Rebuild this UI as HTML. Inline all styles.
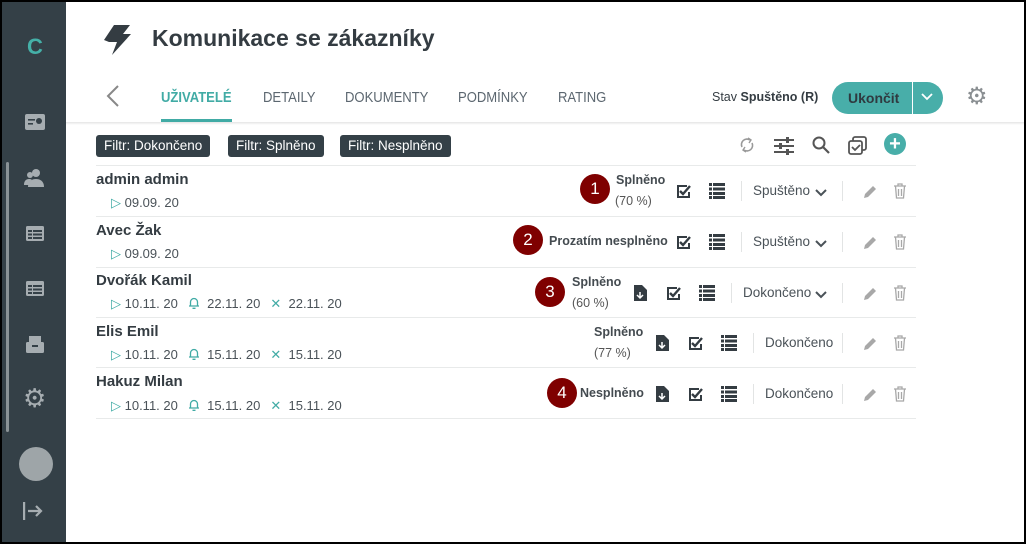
<!DOCTYPE html>
<html><head><meta charset="utf-8"><style>
*{margin:0;padding:0;box-sizing:border-box}
body{width:1026px;height:544px;background:#000;font-family:"Liberation Sans",sans-serif;position:relative;overflow:hidden}
#frame{position:absolute;left:2px;top:2px;width:1022px;height:540px;background:#fff;overflow:hidden}
#side{position:absolute;left:0;top:0;width:64px;height:540px;background:#344047}
.a{position:absolute}
.tab{position:absolute;top:87px;font-size:15px;color:#5c6770;transform:scaleX(.87);transform-origin:0 0;white-space:nowrap}
.chip{position:absolute;top:133px;height:22px;background:#344047;color:#fff;font-size:13.5px;line-height:22px;padding:0 8px;border-radius:3px}
.sep{position:absolute;left:94px;width:820px;height:1px;background:#e8eaea}
.name{position:absolute;left:94px;font-size:15px;font-weight:bold;color:#343c42}
.d{position:absolute;font-size:13px;color:#4a5258;white-space:nowrap}
.t{color:#41aba5}
.st{position:absolute;font-size:12.5px;font-weight:bold;color:#444b50}
.pc{position:absolute;font-size:12.5px;color:#555}
.badge{position:absolute;width:30px;height:30px;border-radius:50%;background:#7f0000;color:#fff;font-size:17px;line-height:30px;text-align:center}
.dd{position:absolute;font-size:13.5px;color:#4a5258;white-space:nowrap}
.vl{position:absolute;width:1px;height:20px;background:#e2e4e4}
.bell{display:inline-block;width:12px;height:13px;vertical-align:-1px;margin-left:10px}
.x{margin-left:10px}
</style></head><body><div id="frame">
<div id="side">
 <div class="a" style="left:25px;top:32px;color:#45b0a8;font-weight:bold;font-size:22px">C</div>
 <div class="a" style="left:4px;top:160px;width:3px;height:270px;background:#8a9296;border-radius:2px"></div>
 <svg class="a" style="left:23px;top:112px" width="20" height="16"><rect x="0" y="0" width="20" height="16" rx="2" fill="#a6adb1"/><rect x="3" y="5" width="7" height="1.6" fill="#344047"/><rect x="3" y="9" width="5" height="1.6" fill="#344047"/><circle cx="14" cy="7" r="3" fill="#344047"/></svg>
 <svg class="a" style="left:22px;top:166px" width="22" height="20"><circle cx="12" cy="5" r="4" fill="#a6adb1"/><path d="M4 19c0-6 4-8 8-8s8 2 8 8z" fill="#a6adb1"/><circle cx="6" cy="7" r="3" fill="#a6adb1"/><path d="M0 17c0-4 2-6 5-6 1 0 2 0 3 1-2 1-3 3-3 5z" fill="#a6adb1"/></svg>
 <svg class="a" style="left:24px;top:224px" width="18" height="15"><rect width="18" height="15" rx="1.5" fill="#a6adb1"/><g fill="#344047"><rect x="2" y="4" width="4" height="2"/><rect x="7" y="4" width="9" height="2"/><rect x="2" y="7.5" width="4" height="2"/><rect x="7" y="7.5" width="9" height="2"/><rect x="2" y="11" width="4" height="2"/><rect x="7" y="11" width="9" height="2"/></g></svg>
 <svg class="a" style="left:24px;top:279px" width="18" height="15"><rect width="18" height="15" rx="1.5" fill="#a6adb1"/><g fill="#344047"><rect x="2" y="4" width="4" height="2"/><rect x="7" y="4" width="9" height="2"/><rect x="2" y="7.5" width="4" height="2"/><rect x="7" y="7.5" width="9" height="2"/><rect x="2" y="11" width="4" height="2"/><rect x="7" y="11" width="9" height="2"/></g></svg>
 <svg class="a" style="left:24px;top:333px" width="18" height="18"><rect x="3" y="1" width="12" height="6" fill="#a6adb1"/><rect x="0" y="7" width="18" height="11" rx="1.5" fill="#a6adb1"/><rect x="6" y="10" width="6" height="2" fill="#344047"/></svg>
 <div class="a" style="left:21px;top:383px;color:#a6adb1;font-size:26px;line-height:26px">⚙</div>
 <div class="a" style="left:17px;top:445px;width:34px;height:34px;border-radius:50%;background:#9ea5a8"></div>
 <svg class="a" style="left:21px;top:500px" width="20" height="18"><rect x="0" y="0" width="2.2" height="18" fill="#a6adb1"/><path d="M5 9h13M13 4l5 5-5 5" stroke="#a6adb1" stroke-width="2.2" fill="none"/></svg>
</div>
<svg class="a" style="left:100px;top:22px" width="30" height="32"><path d="M12 1h16l-7 9h8L10 31l5-13H7l-5-2z" fill="#343c42"/></svg>
<div class="a" style="left:150px;top:23px;font-size:23px;font-weight:bold;color:#343c42">Komunikace se zákazníky</div>
<svg class="a" style="left:104px;top:83px" width="14" height="22"><path d="M12 1L2 11l10 10" stroke="#888" stroke-width="2" fill="none"/></svg>
<div class="tab" style="left:159px;color:#41aba5;font-weight:bold">UŽIVATELÉ</div>
<div class="a" style="left:159px;top:117px;width:71px;height:4px;background:#41aba5"></div>
<div class="tab" style="left:261px">DETAILY</div>
<div class="tab" style="left:343px">DOKUMENTY</div>
<div class="tab" style="left:456px">PODMÍNKY</div>
<div class="tab" style="left:556px">RATING</div>
<div class="a" style="left:710px;top:88px;font-size:12.5px;color:#343c42">Stav <b>Spuštěno (R)</b></div>
<div class="a" style="left:830px;top:80px;width:111px;height:32px;border-radius:16px;background:#48aea9"></div>
<div class="a" style="left:910px;top:80px;width:1px;height:32px;background:#fff"></div>
<div class="a" style="left:846px;top:88px;font-size:14px;font-weight:bold;color:#2f3a40">Ukončit</div>
<svg class="a" style="left:919px;top:91px" width="12" height="8"><path d="M1 1l5 5 5-5" stroke="#fff" stroke-width="1.8" fill="none"/></svg>
<div class="a" style="left:964px;top:81px;font-size:24px;line-height:28px;color:#8a8f92">⚙</div>
<div class="a" style="left:64px;top:120px;width:958px;height:3px;background:linear-gradient(#e4e4e4,#fff)"></div>
<div class="chip" style="left:94px">Filtr: Dokončeno</div>
<div class="chip" style="left:226px">Filtr: Splněno</div>
<div class="chip" style="left:338px">Filtr: Nesplněno</div>
<svg class="a" style="left:737px;top:135px" width="16" height="16"><path d="M3 10a5.5 5.5 0 0 1 8-7M13 6a5.5 5.5 0 0 1-8 7" stroke="#999" stroke-width="1.6" fill="none"/><path d="M9 1l3 2-2 3M7 15l-3-2 2-3" stroke="#999" stroke-width="1.4" fill="none"/></svg>
<svg class="a" style="left:772px;top:135px" width="20" height="18"><g stroke="#555" stroke-width="2"><path d="M0 3h20M0 9h20M0 15h20"/></g><g fill="#555"><rect x="12" y="0" width="3" height="6"/><rect x="5" y="6" width="3" height="6"/><rect x="12" y="12" width="3" height="6"/></g></svg>
<svg class="a" style="left:810px;top:134px" width="18" height="18"><circle cx="7" cy="7" r="5.5" stroke="#555" stroke-width="2" fill="none"/><path d="M11 11l6 6" stroke="#555" stroke-width="2.2"/></svg>
<svg class="a" style="left:846px;top:134px" width="20" height="20"><rect x="5" y="1" width="13" height="13" rx="2" stroke="#555" stroke-width="1.8" fill="none"/><rect x="1" y="5" width="13" height="13" rx="2" stroke="#555" stroke-width="1.8" fill="#fff"/><path d="M4 11l3 3 5-5" stroke="#555" stroke-width="1.8" fill="none"/></svg>
<div class="a" style="left:882px;top:131px;width:22px;height:22px;border-radius:50%;background:#48aea9;color:#fff;text-align:center;font-size:20px;line-height:22px;font-weight:bold">+</div>

<div class="sep" style="top:163px"></div>
<div class="sep" style="top:214px"></div>
<div class="sep" style="top:265px"></div>
<div class="sep" style="top:315px"></div>
<div class="sep" style="top:365px"></div>
<div class="sep" style="top:416px"></div>

<svg width="0" height="0" style="position:absolute"><defs>
<g id="chk"><path d="M1 2h10v2H3v9h9V9h2v6H1z" fill="#343c42"/><path d="M4 8l3 3 7-8" stroke="#343c42" stroke-width="2.4" fill="none"/></g>
<g id="lst" fill="#343c42"><rect x="0" y="0" width="3" height="3"/><rect x="4" y="0" width="12" height="3"/><rect x="0" y="4.5" width="3" height="3"/><rect x="4" y="4.5" width="12" height="3"/><rect x="0" y="9" width="3" height="3"/><rect x="4" y="9" width="12" height="3"/><rect x="0" y="13" width="3" height="3"/><rect x="4" y="13" width="12" height="3"/></g>
<g id="doc"><path d="M0 0h8l5 5v11H0z" fill="#343c42"/><path d="M6 7v6M3 10l3 3 3-3" stroke="#fff" stroke-width="1.5" fill="none"/></g>
<g id="pen"><path d="M2 14l1-4 8-8 3 3-8 8z" fill="#a8a8a8"/></g>
<g id="bin" stroke="#a8a8a8" stroke-width="1.3" fill="none"><path d="M1 3h12M5 3V1h4v2M2.5 3l1 12h7l1-12M5.5 6v7M8.5 6v7"/></g>
<g id="bl" stroke="#41aba5" stroke-width="1.3" fill="none"><path d="M1 10h10M2.5 10V6a3.5 3.5 0 0 1 7 0v4M4.5 12.3h3"/></g>
<g id="cv"><path d="M1 1l5 5 5-5" stroke="#4a5258" stroke-width="2" fill="none"/></g>
</defs></svg>

<div class="name" style="top:169px">admin admin</div>
<div class="d" style="left:109px;top:193px"><span class="t">▷</span> 09.09. 20</div>
<div class="name" style="top:220px">Avec Žak</div>
<div class="d" style="left:109px;top:244px"><span class="t">▷</span> 09.09. 20</div>
<div class="name" style="top:270px">Dvořák Kamil</div>
<div class="d" style="left:109px;top:294px"><span class="t">▷</span> 10.11. 20<svg class="bell"><use href="#bl"/></svg>&nbsp; 22.11. 20<span class="t x">✕</span>&nbsp; 22.11. 20</div>
<div class="name" style="top:321px">Elis Emil</div>
<div class="d" style="left:109px;top:345px"><span class="t">▷</span> 10.11. 20<svg class="bell"><use href="#bl"/></svg>&nbsp; 15.11. 20<span class="t x">✕</span>&nbsp; 15.11. 20</div>
<div class="name" style="top:371px">Hakuz Milan</div>
<div class="d" style="left:109px;top:396px"><span class="t">▷</span> 10.11. 20<svg class="bell"><use href="#bl"/></svg>&nbsp; 15.11. 20<span class="t x">✕</span>&nbsp; 15.11. 20</div>

<div class="badge" style="left:578px;top:172px">1</div>
<div class="st" style="left:614px;top:171px">Splněno</div><div class="pc" style="left:613px;top:192px">(70 %)</div>
<div class="badge" style="left:511px;top:223px">2</div>
<div class="st" style="left:547px;top:232px">Prozatím nesplněno</div>
<div class="badge" style="left:533px;top:275px">3</div>
<div class="st" style="left:570px;top:273px">Splněno</div><div class="pc" style="left:570px;top:294px">(60 %)</div>
<div class="st" style="left:592px;top:323px">Splněno</div><div class="pc" style="left:592px;top:344px">(77 %)</div>
<div class="badge" style="left:545px;top:376px">4</div>
<div class="st" style="left:578px;top:384px">Nesplněno</div>

<svg class="a" style="left:674px;top:181px" width="16" height="16"><use href="#chk"/></svg>
<svg class="a" style="left:707px;top:181px" width="16" height="16"><use href="#lst"/></svg>
<div class="vl" style="left:739px;top:179px"></div>
<div class="dd" style="left:751px;top:181px">Spuštěno</div>
<svg class="a" style="left:813px;top:187px" width="12" height="8"><use href="#cv"/></svg>
<div class="vl" style="left:840px;top:179px"></div>

<svg class="a" style="left:674px;top:232px" width="16" height="16"><use href="#chk"/></svg>
<svg class="a" style="left:707px;top:232px" width="16" height="16"><use href="#lst"/></svg>
<div class="vl" style="left:739px;top:230px"></div>
<div class="dd" style="left:751px;top:232px">Spuštěno</div>
<svg class="a" style="left:813px;top:238px" width="12" height="8"><use href="#cv"/></svg>
<div class="vl" style="left:840px;top:230px"></div>

<svg class="a" style="left:632px;top:283px" width="14" height="17"><use href="#doc"/></svg>
<svg class="a" style="left:664px;top:283px" width="16" height="16"><use href="#chk"/></svg>
<svg class="a" style="left:697px;top:283px" width="16" height="16"><use href="#lst"/></svg>
<div class="vl" style="left:729px;top:281px"></div>
<div class="dd" style="left:741px;top:283px">Dokončeno</div>
<svg class="a" style="left:813px;top:289px" width="12" height="8"><use href="#cv"/></svg>
<div class="vl" style="left:840px;top:281px"></div>

<svg class="a" style="left:654px;top:333px" width="14" height="17"><use href="#doc"/></svg>
<svg class="a" style="left:686px;top:333px" width="16" height="16"><use href="#chk"/></svg>
<svg class="a" style="left:719px;top:333px" width="16" height="16"><use href="#lst"/></svg>
<div class="vl" style="left:751px;top:331px"></div>
<div class="dd" style="left:763px;top:333px">Dokončeno</div>
<div class="vl" style="left:840px;top:331px"></div>

<svg class="a" style="left:654px;top:384px" width="14" height="17"><use href="#doc"/></svg>
<svg class="a" style="left:686px;top:384px" width="16" height="16"><use href="#chk"/></svg>
<svg class="a" style="left:719px;top:384px" width="16" height="16"><use href="#lst"/></svg>
<div class="vl" style="left:751px;top:382px"></div>
<div class="dd" style="left:763px;top:384px">Dokončeno</div>
<div class="vl" style="left:840px;top:382px"></div>

<svg class="a" style="left:860px;top:182px" width="16" height="16"><use href="#pen"/></svg>
<svg class="a" style="left:891px;top:181px" width="14" height="16"><use href="#bin"/></svg>
<svg class="a" style="left:860px;top:233px" width="16" height="16"><use href="#pen"/></svg>
<svg class="a" style="left:891px;top:232px" width="14" height="16"><use href="#bin"/></svg>
<svg class="a" style="left:860px;top:284px" width="16" height="16"><use href="#pen"/></svg>
<svg class="a" style="left:891px;top:283px" width="14" height="16"><use href="#bin"/></svg>
<svg class="a" style="left:860px;top:334px" width="16" height="16"><use href="#pen"/></svg>
<svg class="a" style="left:891px;top:333px" width="14" height="16"><use href="#bin"/></svg>
<svg class="a" style="left:860px;top:385px" width="16" height="16"><use href="#pen"/></svg>
<svg class="a" style="left:891px;top:384px" width="14" height="16"><use href="#bin"/></svg>
</div>
</body></html>
